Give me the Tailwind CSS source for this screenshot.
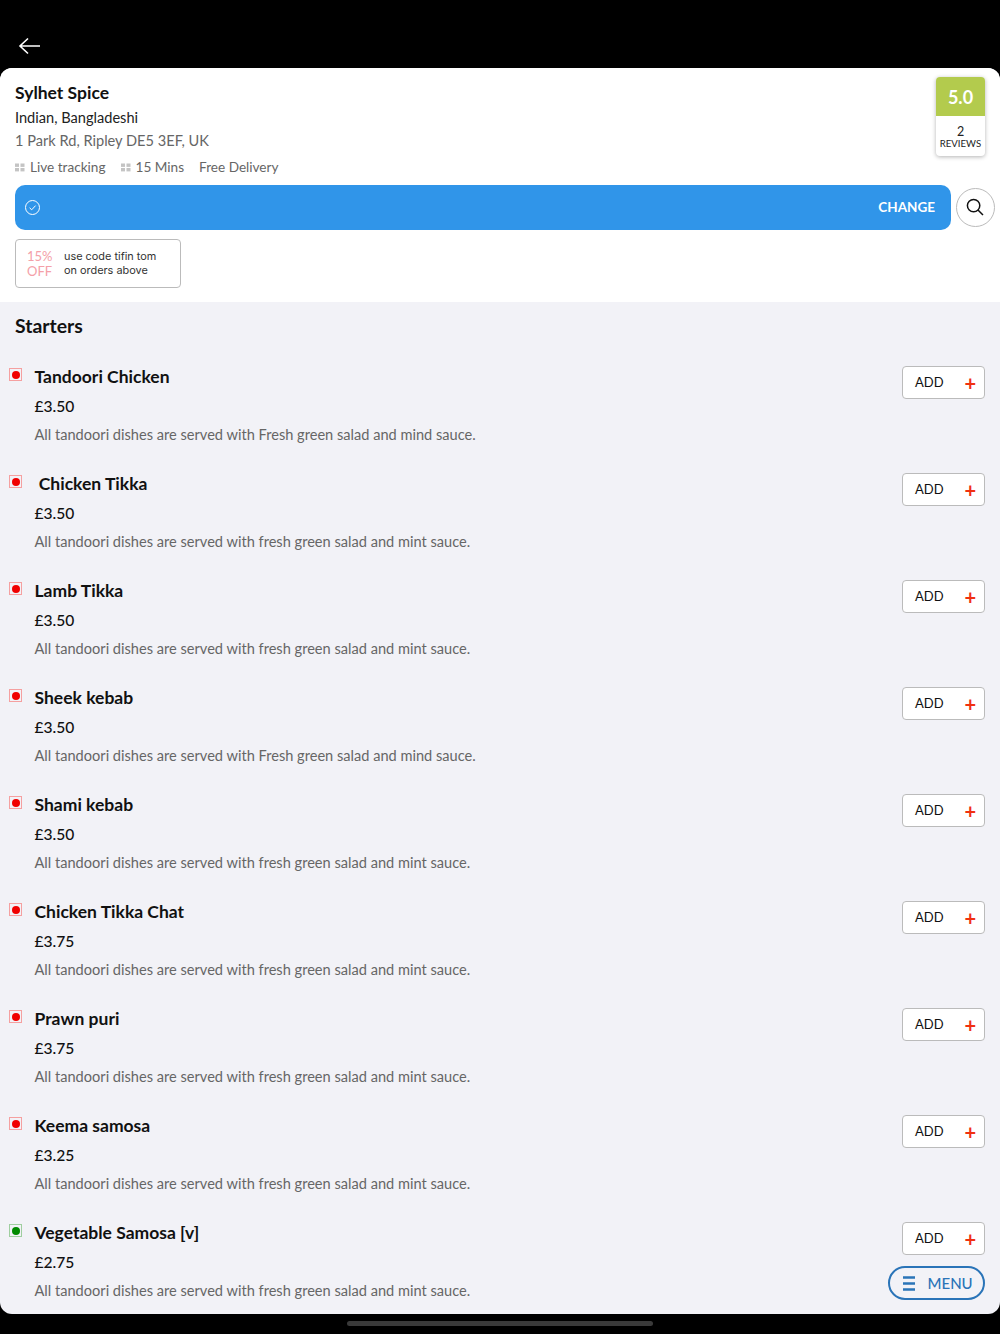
<!DOCTYPE html>
<html>
<head>
<meta charset="utf-8">
<script src="https://cdn.jsdelivr.net/npm/@tailwindcss/browser@4"></script>
</head>
<body class="bg-black font-['Lato',sans-serif]">
<div class="relative w-[1000px] h-[1334px] bg-black overflow-hidden">
  <div class="h-[68px] flex items-end pl-[18px] pb-[12px]">
    <svg width="23" height="20" viewBox="0 0 23 20" fill="none" stroke="white" stroke-width="1.6"><path d="M22 10H2M10 2.5 2 10l8 7.5"/></svg>
  </div>
  <div class="relative h-[1246px] rounded-[12px] overflow-hidden bg-[#f2f2f7]">
    <header class="relative h-[234px] bg-white px-[15px] pt-[12px]">
      <h1 class="text-[17.5px] leading-[25px] font-bold text-[#111]">Sylhet Spice</h1>
      <p class="text-[14.6px] leading-[23px] mt-[1px] text-[#222]">Indian, Bangladeshi</p>
      <p class="text-[14.6px] leading-[23px] text-[#666]">1 Park Rd, Ripley DE5 3EF, UK</p>
      <div class="flex items-center mt-[4px] h-[23px] text-[13.6px] text-[#666]">
        <svg width="10" height="9" viewBox="0 0 10 9" class="mr-[5px]" fill="#c4c4c4"><rect x="0" y="0.5" width="4" height="3.4"/><rect x="5.5" y="0.5" width="4" height="3.4"/><rect x="0" y="5" width="4" height="3.4"/><rect x="5.5" y="5" width="4" height="3.4"/></svg>
        <span>Live tracking</span>
        <svg width="10" height="9" viewBox="0 0 10 9" class="ml-[15px] mr-[5px]" fill="#c4c4c4"><rect x="0" y="0.5" width="4" height="3.4"/><rect x="5.5" y="0.5" width="4" height="3.4"/><rect x="0" y="5" width="4" height="3.4"/><rect x="5.5" y="5" width="4" height="3.4"/></svg>
        <span>15 Mins</span>
        <span class="ml-[15px]">Free Delivery</span>
      </div>
      <div class="flex items-center gap-[5px] mt-[6px] w-[980px]">
        <div class="w-[936px] shrink-0 h-[45px] rounded-[10px] bg-[#3095e9] flex items-center justify-between pl-[10px] pr-[16px]">
          <svg width="15" height="15" viewBox="0 0 15 15" fill="none" stroke="white" stroke-width="1"><circle cx="7.5" cy="7.5" r="7"/><path d="M4.6 7.8 6.7 9.8 10.6 5.6"/></svg>
          <span class="text-[13.5px] font-bold text-white">CHANGE</span>
        </div>
        <div class="w-[39px] h-[39px] shrink-0 rounded-full border border-[#bbb] flex items-center justify-center bg-white">
          <svg width="18" height="18" viewBox="0 0 18 18" fill="none" stroke="#111" stroke-width="1.5" class="mr-[2px] mb-[1px]"><circle cx="7.6" cy="7.6" r="6.2"/><path d="M12 12l5 5"/></svg>
        </div>
      </div>
      <div class="flex items-center w-[166px] h-[49px] mt-[9px] rounded-[4px] border border-[#bbb] pl-[11px]">
        <div class="w-[37px] text-[13px] leading-[15px] text-[#f4a0a8]">15%<br>OFF</div>
        <div class="text-[10.9px] leading-[13.5px] text-[#333] font-['Inter',sans-serif]">use code tifin tom<br>on orders above</div>
      </div>
      <div class="absolute top-[9px] left-[936px] w-[49px] h-[79px] rounded-[4px] bg-white shadow-[0_1px_4px_rgba(0,0,0,0.3)] overflow-hidden text-center">
        <div class="h-[39px] bg-[#b3cb4d] text-white font-bold text-[18px] leading-[40px]">5.0</div>
        <div class="text-[#222] text-[12.5px] leading-[13px] pt-[9px]">2</div>
        <div class="text-[#222] text-[9.6px] leading-[12px]">REVIEWS</div>
      </div>
    </header>
    <main class="relative">
      <h2 class="text-[19.4px] leading-[28px] font-bold text-[#111] pl-[15px] pt-[10px] pb-[22px]">Starters</h2>
      <div class="flex flex-col">
        <article class="relative h-[107px] pl-[34.5px]">
          <span class="absolute left-[9px] top-[6px] w-[13px] h-[13px] border border-[#f5a0a0] flex items-center justify-center"><span class="w-[8px] h-[8px] rounded-full bg-[#f00000]"></span></span>
          <h3 class="text-[17.5px] leading-[28px] mt-[1px] font-bold text-[#111]">Tandoori Chicken</h3>
          <p class="text-[15.6px] leading-[28px] mt-[1px] font-medium text-[#111]">£3.50</p>
          <p class="text-[14.6px] leading-[28px] mt-[1px] text-[#666]">All tandoori dishes are served with Fresh green salad and mind sauce.</p>
          <div class="absolute top-[4px] left-[902px] w-[83px] h-[33px] rounded-[4px] border border-[#bbb] bg-white flex items-center justify-between pl-[12px] pr-[8px]"><span class="text-[13px] text-[#111]">ADD</span><span class="text-[20px] leading-none font-bold text-[#f03010]">+</span></div>
        </article>
        <article class="relative h-[107px] pl-[34.5px]">
          <span class="absolute left-[9px] top-[6px] w-[13px] h-[13px] border border-[#f5a0a0] flex items-center justify-center"><span class="w-[8px] h-[8px] rounded-full bg-[#f00000]"></span></span>
          <h3 class="text-[17.5px] leading-[28px] mt-[1px] font-bold text-[#111] whitespace-pre"> Chicken Tikka</h3>
          <p class="text-[15.6px] leading-[28px] mt-[1px] font-medium text-[#111]">£3.50</p>
          <p class="text-[14.6px] leading-[28px] mt-[1px] text-[#666]">All tandoori dishes are served with fresh green salad and mint sauce.</p>
          <div class="absolute top-[4px] left-[902px] w-[83px] h-[33px] rounded-[4px] border border-[#bbb] bg-white flex items-center justify-between pl-[12px] pr-[8px]"><span class="text-[13px] text-[#111]">ADD</span><span class="text-[20px] leading-none font-bold text-[#f03010]">+</span></div>
        </article>
        <article class="relative h-[107px] pl-[34.5px]">
          <span class="absolute left-[9px] top-[6px] w-[13px] h-[13px] border border-[#f5a0a0] flex items-center justify-center"><span class="w-[8px] h-[8px] rounded-full bg-[#f00000]"></span></span>
          <h3 class="text-[17.5px] leading-[28px] mt-[1px] font-bold text-[#111]">Lamb Tikka</h3>
          <p class="text-[15.6px] leading-[28px] mt-[1px] font-medium text-[#111]">£3.50</p>
          <p class="text-[14.6px] leading-[28px] mt-[1px] text-[#666]">All tandoori dishes are served with fresh green salad and mint sauce.</p>
          <div class="absolute top-[4px] left-[902px] w-[83px] h-[33px] rounded-[4px] border border-[#bbb] bg-white flex items-center justify-between pl-[12px] pr-[8px]"><span class="text-[13px] text-[#111]">ADD</span><span class="text-[20px] leading-none font-bold text-[#f03010]">+</span></div>
        </article>
        <article class="relative h-[107px] pl-[34.5px]">
          <span class="absolute left-[9px] top-[6px] w-[13px] h-[13px] border border-[#f5a0a0] flex items-center justify-center"><span class="w-[8px] h-[8px] rounded-full bg-[#f00000]"></span></span>
          <h3 class="text-[17.5px] leading-[28px] mt-[1px] font-bold text-[#111]">Sheek kebab</h3>
          <p class="text-[15.6px] leading-[28px] mt-[1px] font-medium text-[#111]">£3.50</p>
          <p class="text-[14.6px] leading-[28px] mt-[1px] text-[#666]">All tandoori dishes are served with Fresh green salad and mind sauce.</p>
          <div class="absolute top-[4px] left-[902px] w-[83px] h-[33px] rounded-[4px] border border-[#bbb] bg-white flex items-center justify-between pl-[12px] pr-[8px]"><span class="text-[13px] text-[#111]">ADD</span><span class="text-[20px] leading-none font-bold text-[#f03010]">+</span></div>
        </article>
        <article class="relative h-[107px] pl-[34.5px]">
          <span class="absolute left-[9px] top-[6px] w-[13px] h-[13px] border border-[#f5a0a0] flex items-center justify-center"><span class="w-[8px] h-[8px] rounded-full bg-[#f00000]"></span></span>
          <h3 class="text-[17.5px] leading-[28px] mt-[1px] font-bold text-[#111]">Shami kebab</h3>
          <p class="text-[15.6px] leading-[28px] mt-[1px] font-medium text-[#111]">£3.50</p>
          <p class="text-[14.6px] leading-[28px] mt-[1px] text-[#666]">All tandoori dishes are served with fresh green salad and mint sauce.</p>
          <div class="absolute top-[4px] left-[902px] w-[83px] h-[33px] rounded-[4px] border border-[#bbb] bg-white flex items-center justify-between pl-[12px] pr-[8px]"><span class="text-[13px] text-[#111]">ADD</span><span class="text-[20px] leading-none font-bold text-[#f03010]">+</span></div>
        </article>
        <article class="relative h-[107px] pl-[34.5px]">
          <span class="absolute left-[9px] top-[6px] w-[13px] h-[13px] border border-[#f5a0a0] flex items-center justify-center"><span class="w-[8px] h-[8px] rounded-full bg-[#f00000]"></span></span>
          <h3 class="text-[17.5px] leading-[28px] mt-[1px] font-bold text-[#111]">Chicken Tikka Chat</h3>
          <p class="text-[15.6px] leading-[28px] mt-[1px] font-medium text-[#111]">£3.75</p>
          <p class="text-[14.6px] leading-[28px] mt-[1px] text-[#666]">All tandoori dishes are served with fresh green salad and mint sauce.</p>
          <div class="absolute top-[4px] left-[902px] w-[83px] h-[33px] rounded-[4px] border border-[#bbb] bg-white flex items-center justify-between pl-[12px] pr-[8px]"><span class="text-[13px] text-[#111]">ADD</span><span class="text-[20px] leading-none font-bold text-[#f03010]">+</span></div>
        </article>
        <article class="relative h-[107px] pl-[34.5px]">
          <span class="absolute left-[9px] top-[6px] w-[13px] h-[13px] border border-[#f5a0a0] flex items-center justify-center"><span class="w-[8px] h-[8px] rounded-full bg-[#f00000]"></span></span>
          <h3 class="text-[17.5px] leading-[28px] mt-[1px] font-bold text-[#111]">Prawn puri</h3>
          <p class="text-[15.6px] leading-[28px] mt-[1px] font-medium text-[#111]">£3.75</p>
          <p class="text-[14.6px] leading-[28px] mt-[1px] text-[#666]">All tandoori dishes are served with fresh green salad and mint sauce.</p>
          <div class="absolute top-[4px] left-[902px] w-[83px] h-[33px] rounded-[4px] border border-[#bbb] bg-white flex items-center justify-between pl-[12px] pr-[8px]"><span class="text-[13px] text-[#111]">ADD</span><span class="text-[20px] leading-none font-bold text-[#f03010]">+</span></div>
        </article>
        <article class="relative h-[107px] pl-[34.5px]">
          <span class="absolute left-[9px] top-[6px] w-[13px] h-[13px] border border-[#f5a0a0] flex items-center justify-center"><span class="w-[8px] h-[8px] rounded-full bg-[#f00000]"></span></span>
          <h3 class="text-[17.5px] leading-[28px] mt-[1px] font-bold text-[#111]">Keema samosa</h3>
          <p class="text-[15.6px] leading-[28px] mt-[1px] font-medium text-[#111]">£3.25</p>
          <p class="text-[14.6px] leading-[28px] mt-[1px] text-[#666]">All tandoori dishes are served with fresh green salad and mint sauce.</p>
          <div class="absolute top-[4px] left-[902px] w-[83px] h-[33px] rounded-[4px] border border-[#bbb] bg-white flex items-center justify-between pl-[12px] pr-[8px]"><span class="text-[13px] text-[#111]">ADD</span><span class="text-[20px] leading-none font-bold text-[#f03010]">+</span></div>
        </article>
        <article class="relative h-[107px] pl-[34.5px]">
          <span class="absolute left-[9px] top-[6px] w-[13px] h-[13px] border border-[#9fce9f] flex items-center justify-center"><span class="w-[8px] h-[8px] rounded-full bg-[#008a00]"></span></span>
          <h3 class="text-[17.5px] leading-[28px] mt-[1px] font-bold text-[#111]">Vegetable Samosa [v]</h3>
          <p class="text-[15.6px] leading-[28px] mt-[1px] font-medium text-[#111]">£2.75</p>
          <p class="text-[14.6px] leading-[28px] mt-[1px] text-[#666]">All tandoori dishes are served with fresh green salad and mint sauce.</p>
          <div class="absolute top-[4px] left-[902px] w-[83px] h-[33px] rounded-[4px] border border-[#bbb] bg-white flex items-center justify-between pl-[12px] pr-[8px]"><span class="text-[13px] text-[#111]">ADD</span><span class="text-[20px] leading-none font-bold text-[#f03010]">+</span></div>
        </article>
      </div>
    </main>
    <div class="absolute top-[1198px] left-[888px] w-[97px] h-[34px] rounded-full border-2 border-[#2a74b8] bg-[#f2f2f7] flex items-center pl-[12.5px] gap-[13px] text-[#2a74b8]">
      <svg width="12" height="15" viewBox="0 0 12 15" fill="none" stroke="#2a74b8" stroke-width="2.4"><path d="M0 1.5h12M0 7.5h12M0 13.5h12"/></svg>
      <span class="text-[15px] font-medium">MENU</span>
    </div>
  </div>
  <div class="absolute left-[347px] top-[1321px] w-[306px] h-[5px] rounded-full bg-[#3a3a3a]"></div>
</div>
</body>
</html>
